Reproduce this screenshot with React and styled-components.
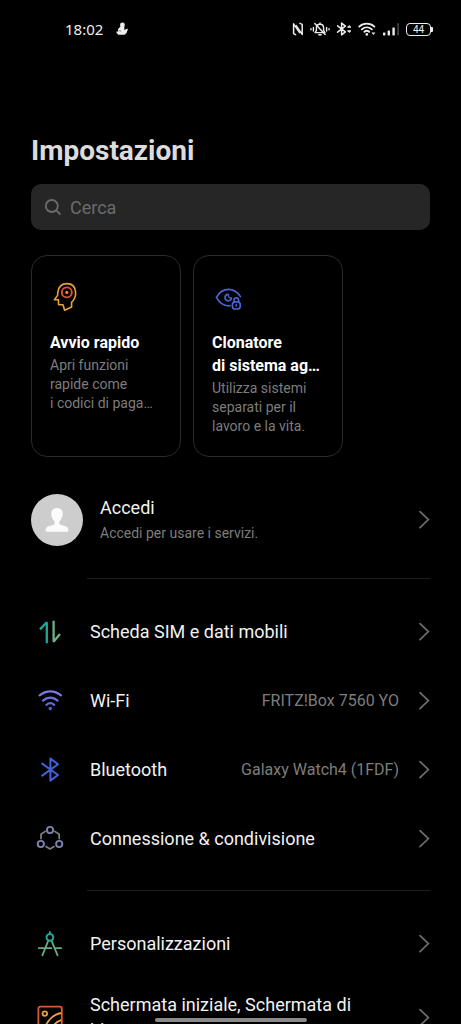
import React from 'react'
import styled, { createGlobalStyle } from 'styled-components';

const colors = {
  bg: '#000000',
  title: '#dcdcdc',
  text: '#f2f2f2',
  muted: '#7d7d7d',
  field: '#262626',
  placeholder: '#6b6b6b',
  line: '#1d1d1d',
  cardBorder: '#2a2a2a',
  chevron: '#6e6e6e',
  status: '#ededed',
};


const SnowmanIcon = () => (
  <svg width="14" height="14" viewBox="0 0 14 14" fill={colors.status} aria-hidden="true">
    <circle cx="7.4" cy="3" r="2.4" />
    <path d="M5.4 4.5 9.2 4 9.4 8 12.4 6.6 12.8 7.4 11.6 10.8 9.6 12.8H3.4L1.6 11 1.4 9.4 3.4 9.6 2.8 7.4Z" />
    <path d="M4.2 8.4 6 9.2" stroke="#000" strokeWidth="0.5" fill="none" />
  </svg>
);

const NfcIcon = () => (
  <svg width="12" height="14" viewBox="0 0 12 14" fill="none" stroke={colors.status} strokeWidth="1.5" strokeLinejoin="round" strokeLinecap="round" aria-hidden="true">
    <path d="M3.6 12.6 1.6 11.6V1.8L7.6 10.6" />
    <path d="M8 1.4 10.2 2.4V12.4L4.2 3.6" />
  </svg>
);

const MutedBellIcon = () => (
  <svg width="20" height="14" viewBox="0 0 20 14" fill="none" stroke={colors.status} strokeWidth="1.4" strokeLinecap="round" aria-hidden="true">
    <path d="M5 10.6H15L13.6 8.6V5.8C13.6 3.6 12.2 2.2 10 2.2S6.4 3.6 6.4 5.8V8.6Z" strokeLinejoin="round" />
    <path d="M10 1V2M8.8 12.8H11.2M4.8 1.6 15.2 12.4" />
    <path d="M3.4 5.4V9M1 6.6V7.8M16.6 5.4V9M19 6.6V7.8" />
  </svg>
);

const StatusBluetoothIcon = () => (
  <svg width="16" height="14" viewBox="0 0 16 14" fill="none" stroke={colors.status} strokeWidth="1.5" strokeLinejoin="round" strokeLinecap="round" aria-hidden="true">
    <path d="M1.6 3.8 9.4 9.8 5.6 12.9V1.1L9.4 4.2 1.6 10.2" />
    <path d="M11.8 5 13.2 3.6 14.6 5ZM11.8 9 13.2 10.4 14.6 9Z" fill={colors.status} strokeWidth="1" />
  </svg>
);

const StatusWifiIcon = () => (
  <svg width="19" height="14" viewBox="0 0 19 14" fill="none" stroke={colors.status} strokeWidth="1.8" strokeLinecap="round" aria-hidden="true">
    <path d="M1.2 4.6C5.4 .6 12 .6 16.4 4.6M3.8 7.4C6.8 4.6 10.8 4.6 13.8 7.4M6.4 9.8C8 8.4 9.6 8.4 11.2 9.8" />
    <circle cx="8.8" cy="12.4" r="1.3" fill={colors.status} stroke="none" />
    <path d="M13.4 10.6H17.4L15.4 13Z" fill={colors.status} stroke="none" />
  </svg>
);

const SignalIcon = () => (
  <svg width="17" height="14" viewBox="0 0 17 14" fill={colors.status} aria-hidden="true">
    <rect x="0" y="10.4" width="2.4" height="3" rx=".6" />
    <rect x="4.6" y="8.6" width="2.4" height="4.8" rx=".6" />
    <rect x="9.4" y="5.4" width="2.4" height="8" rx=".6" />
    <rect x="14.2" y="1" width="1.8" height="12.4" rx=".6" fill="#3c3c3c" />
  </svg>
);

const SearchIcon = () => (
  <svg width="18" height="18" viewBox="0 0 18 18" fill="none" stroke={colors.placeholder} strokeWidth="1.8" strokeLinecap="round" aria-hidden="true">
    <circle cx="7.8" cy="8" r="6" />
    <path d="M12.2 12.4 16 16" />
  </svg>
);

const HeadIcon = () => (
  <svg width="30" height="32" viewBox="0 0 30 32" fill="none" strokeLinejoin="round" strokeLinecap="round" aria-hidden="true">
    <path d="M17 2.6C11.4 2.6 8.4 6 7.8 11.4L7.6 14.4 4.4 18.8H8.4L8.6 23.8H13L14.6 29.2 21.6 26V21.4C24.4 18.6 26 15.4 25.6 11.2 25.2 6 22 2.6 17 2.6Z" stroke="#e9a13b" strokeWidth="1.6" />
    <circle cx="16.8" cy="11.4" r="5" stroke="#e0533a" strokeWidth="1.9" />
    <circle cx="16.8" cy="11.4" r="1.6" fill="#ef7f35" />
  </svg>
);

const EyeLockIcon = () => (
  <svg width="30" height="32" viewBox="0 0 30 32" fill="none" stroke="#4a63cf" strokeWidth="1.7" strokeLinecap="round" strokeLinejoin="round" aria-hidden="true">
    <path d="M28.4 15.6C25.4 10.8 21 8.4 16.6 8.4 11.6 8.4 7 11.6 4.4 16.4 7.2 21.6 11.4 24.8 16.6 24.8L18 24.7" />
    <path d="M16 13.4A3.2 3.2 0 1 0 19.4 17.2" />
    <path d="M16.4 13.4 17 16.4 19.4 17.2" strokeWidth="1.2" />
    <rect x="20.4" y="20.8" width="7.8" height="7.2" rx="2.8" />
    <path d="M22 20.8V19.2C22 16.2 26.6 16.2 26.6 19.2V20.8M24.3 23.6V24.8" />
  </svg>
);

const AvatarIcon = () => (
  <svg width="26" height="26" viewBox="0 0 26 26" fill="#fbfbfb" aria-hidden="true">
    <path d="M13 1C9.4 1 7.3 3.4 7.3 6.8 7.3 10.2 8.8 13 10.6 14.4V16.4C10.6 17.2 10 17.6 9 17.9L4.4 19.2C2.2 20 1.6 21.6 1.6 23.6 1.6 24.4 2 24.8 2.8 24.8H23.2C24 24.8 24.4 24.4 24.4 23.6 24.4 21.6 23.8 20 21.6 19.2L17 17.9C16 17.6 15.4 17.2 15.4 16.4V14.4C17.2 13 18.7 10.2 18.7 6.8 18.7 3.4 16.6 1 13 1Z" />
  </svg>
);

const ChevronIcon = () => (
  <svg width="12" height="20" viewBox="0 0 12 20" fill="none" stroke={colors.chevron} strokeWidth="1.7" strokeLinecap="round" aria-hidden="true">
    <path d="M2 1.6 10.4 9.6 2 17.6" />
  </svg>
);

const SimIcon = () => (
  <svg width="28" height="28" viewBox="0 0 28 28" fill="none" strokeWidth="2.3" strokeLinejoin="bevel" aria-hidden="true">
    <path d="M4 11.4 10.8 4.2V25.2" stroke="#24a594" />
    <path d="M17.6 2.8V23.8L24 16" stroke="#6dae85" />
  </svg>
);

const WifiIcon = () => (
  <svg width="28" height="28" viewBox="0 0 28 28" fill="none" stroke="#5f6bd8" strokeWidth="2.2" strokeLinecap="round" aria-hidden="true">
    <path d="M3.6 8.4C10 3 18.6 3 25 8.4" stroke="#7f78dc" />
    <path d="M7 13.6C11.4 9.6 17.2 9.6 21.6 13.6" stroke="#6a70dc" />
    <path d="M10.4 17.8C12.8 15.8 15.8 15.8 18.2 17.8" />
    <circle cx="14.3" cy="21.6" r="1.8" fill="#4a60cc" stroke="none" />
  </svg>
);

const BluetoothIcon = () => (
  <svg width="28" height="28" viewBox="0 0 28 28" fill="none" stroke="#4262da" strokeWidth="2" strokeLinejoin="round" strokeLinecap="round" aria-hidden="true">
    <path d="M6.2 7.6 22 19 14.4 24.6V2.6L22 8.2 6.2 19.6" />
  </svg>
);

const ShareIcon = () => (
  <svg width="28" height="28" viewBox="0 0 28 28" fill="none" strokeWidth="1.7" strokeLinecap="round" aria-hidden="true">
    <path d="M9.2 6.4 5 9.2V13.6M18.8 6.4 23.2 9.2V13.6M10 21.6 14 24 18 21.6" stroke="#79837f" />
    <g stroke="#7a83ad" strokeWidth="1.9">
      <circle cx="14" cy="5" r="3.1" />
      <circle cx="4.8" cy="19" r="3.1" />
      <circle cx="23.2" cy="19" r="3.1" />
    </g>
  </svg>
);

const CompassIcon = () => (
  <svg width="28" height="28" viewBox="0 0 28 28" fill="none" strokeWidth="1.8" strokeLinecap="round" aria-hidden="true">
    <path d="M12.4 10.4 6.4 25.4M15.4 10.4 21.6 25.4M2.8 18.2H15.2M19.2 18.2H25.2" stroke="#66aa80" />
    <path d="M13.9 1.8V4" stroke="#1fa694" />
    <circle cx="13.9" cy="7.4" r="3.4" stroke="#1fa694" strokeWidth="2" />
  </svg>
);

const WallpaperIcon = () => (
  <svg width="28" height="28" viewBox="0 0 28 28" fill="none" strokeWidth="1.8" aria-hidden="true">
    <rect x="2.4" y="2.6" width="23.4" height="23" rx="2" stroke="#dd5a36" />
    <g stroke="#e8a045">
      <circle cx="8.8" cy="9.6" r="2.3" />
      <path d="M8.4 25C10.8 17 17 10.6 25.2 9M15 25C17.4 20.6 20.6 17.6 25.2 16.2" />
    </g>
  </svg>
);

const shortcuts = [
  { icon: HeadIcon, title: ['Avvio rapido'], text: ['Apri funzioni', 'rapide come', 'i codici di paga…'] },
  { icon: EyeLockIcon, title: ['Clonatore', 'di sistema ag…'], text: ['Utilizza sistemi', 'separati per il', 'lavoro e la vita.'] },
];

const groups = [
  [
    { icon: SimIcon, label: 'Scheda SIM e dati mobili' },
    { icon: WifiIcon, label: 'Wi-Fi', value: 'FRITZ!Box 7560 YO' },
    { icon: BluetoothIcon, label: 'Bluetooth', value: 'Galaxy Watch4 (1FDF)' },
    { icon: ShareIcon, label: 'Connessione & condivisione' },
  ],
  [
    { icon: CompassIcon, label: 'Personalizzazioni' },
    { icon: WallpaperIcon, label: 'Schermata iniziale, Schermata di blocco' },
  ],
];


const App = () => {
  return (
    <Screen>
      <GlobalStyle />
      <StatusBar>
        <Clock>18:02</Clock>
        <SnowmanIcon />
        <StatusIcons>
          <NfcIcon />
          <MutedBellIcon />
          <StatusBluetoothIcon />
          <StatusWifiIcon />
          <SignalIcon />
          <Battery>44</Battery>
        </StatusIcons>
      </StatusBar>

      <Content>
        <Title>Impostazioni</Title>

        <SearchBox>
          <SearchIcon />
          <input type="search" placeholder="Cerca" aria-label="Cerca" />
        </SearchBox>

        <Cards>
          {shortcuts.map(({ icon: Icon, title, text }) => (
            <Card key={title[0]} type="button">
              <Icon />
              <CardTitle>{title.map((line) => <span key={line}>{line}</span>)}</CardTitle>
              <CardText>{text.map((line) => <span key={line}>{line}</span>)}</CardText>
            </Card>
          ))}
        </Cards>

        <Account href="#accedi">
          <Avatar><AvatarIcon /></Avatar>
          <AccountText>
            <strong>Accedi</strong>
            <small>Accedi per usare i servizi.</small>
          </AccountText>
          <ChevronIcon />
        </Account>

        {groups.map((rows) => (
          <Group key={rows[0].label}>
            {rows.map(({ icon: Icon, label, value }) => (
              <li key={label}>
                <Row href="#impostazione">
                  <Icon />
                  <RowLabel>{label}</RowLabel>
                  {value && <RowValue>{value}</RowValue>}
                  <ChevronIcon />
                </Row>
              </li>
            ))}
          </Group>
        ))}
      </Content>
      <HomePill />
    </Screen>
  )
};

const GlobalStyle = createGlobalStyle`
  * {
    box-sizing: border-box;
  }

  body {
    margin: 0;
    background-color: ${colors.bg};
    font-family: Roboto, "Noto Sans", sans-serif;
    color: ${colors.text};
  }

  svg {
    display: block;
    flex-shrink: 0;
  }
`;

const Screen = styled.div`
  display: flex;
  flex-direction: column;
  height: 100vh;
  overflow: hidden;
`;

const StatusBar = styled.header`
  display: flex;
  align-items: center;
  flex-shrink: 0;
  gap: 12px;
  height: 58px;
  padding: 0 28px 0 65px;
`;

const Clock = styled.time`
  font-family: "Noto Sans", sans-serif;
  font-size: 15px;
  line-height: 20px;
  color: ${colors.status};
`;

const StatusIcons = styled.div`
  display: flex;
  align-items: center;
  gap: 6px;
  margin-left: auto;
`;

const Battery = styled.span`
  position: relative;
  width: 25px;
  height: 13px;
  margin-right: 2px;
  border: 1px solid ${colors.status};
  border-radius: 4px;
  font-size: 10px;
  line-height: 11px;
  text-align: center;
  color: ${colors.status};

  &::after {
    content: '';
    position: absolute;
    top: 3px;
    right: -3px;
    width: 2px;
    height: 5px;
    border-radius: 0 1px 1px 0;
    background-color: ${colors.status};
  }
`;

const Content = styled.main`
  flex: 1;
  min-height: 0;
  overflow-y: auto;
  scrollbar-width: none;
  padding: 75px 31px 0;
`;

const Title = styled.h1`
  margin: 0 0 15px;
  font-size: 28px;
  line-height: 36px;
  font-weight: 700;
  color: ${colors.title};
`;

const SearchBox = styled.label`
  display: flex;
  align-items: center;
  gap: 8px;
  height: 46px;
  padding: 0 13px;
  border-radius: 10px;
  background-color: ${colors.field};

  & > input {
    flex: 1;
    min-width: 0;
    padding: 0;
    border: 0;
    outline: 0;
    background: none;
    font: inherit;
    font-size: 18px;
    color: ${colors.text};
  }

  & > input::placeholder {
    color: ${colors.placeholder};
    opacity: 1;
  }
`;

const Cards = styled.div`
  display: grid;
  grid-template-columns: repeat(auto-fill, 150px);
  gap: 12px;
  margin-top: 25px;
`;

const Card = styled.button`
  display: flex;
  flex-direction: column;
  align-items: flex-start;
  min-height: 202px;
  padding: 25px 18px 18px;
  border: 1px solid ${colors.cardBorder};
  border-radius: 16px;
  background: none;
  font: inherit;
  text-align: left;
  white-space: nowrap;

  & span {
    display: block;
  }
`;

const CardTitle = styled.strong`
  margin-top: 18px;
  font-size: 16px;
  line-height: 23px;
  font-weight: 700;
  color: #ffffff;
`;

const CardText = styled.div`
  margin-top: 2px;
  font-size: 14px;
  line-height: 19px;
  color: ${colors.muted};
`;

const Account = styled.a`
  display: flex;
  align-items: center;
  gap: 17px;
  padding: 37px 0 32px;
  color: inherit;
  text-decoration: none;
`;

const Avatar = styled.span`
  display: flex;
  align-items: center;
  justify-content: center;
  width: 52px;
  height: 52px;
  border-radius: 50%;
  background-color: #cdcdcd;
`;

const AccountText = styled.div`
  flex: 1;

  & > * {
    display: block;
    font-weight: 400;
  }

  & > strong {
    font-size: 18px;
    line-height: 26px;
  }

  & > small {
    font-size: 14px;
    line-height: 24px;
    color: ${colors.muted};
  }
`;

const Group = styled.ul`
  margin: 0;
  padding: 18px 0 17px;
  list-style: none;

  &::before {
    content: '';
    display: block;
    height: 1px;
    margin: -18px 0 18px 56px;
    background-color: ${colors.line};
  }
`;

const Row = styled.a`
  display: flex;
  align-items: center;
  min-height: 69px;
  padding: 14px 0 14px 5px;
  color: inherit;
  text-decoration: none;
`;

const RowLabel = styled.span`
  flex: 1;
  margin: 0 20px 0 26px;
  font-size: 18px;
  line-height: 26px;
`;

const RowValue = styled.span`
  margin-right: 19px;
  font-size: 16px;
  line-height: 26px;
  color: ${colors.muted};
`;

const HomePill = styled.div`
  position: fixed;
  bottom: 2px;
  left: 50%;
  width: 33%;
  height: 4px;
  border-radius: 2px;
  background-color: #8a8a8a;
  transform: translateX(-50%);
`;

export default App;
